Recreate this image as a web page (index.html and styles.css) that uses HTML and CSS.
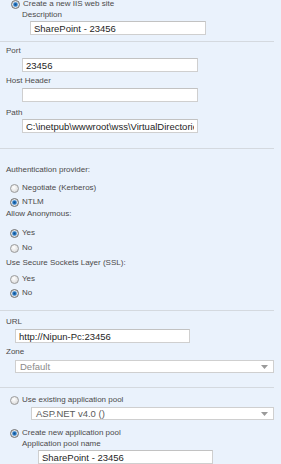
FILE: index.html
```html
<!DOCTYPE html>
<html lang="en">
<head>
  <meta charset="UTF-8">
  <title>Create New Web Application</title>
  <link rel="stylesheet" href="styles.css">
</head>
<body>
  <div class="panel">
    <div class="group group-site">
      <label class="choice choice-top"><input type="radio" name="site" checked> Create a new IIS web site</label>
      <div class="label indent mt1">Description</div>
      <input class="field field-desc mt1" type="text" value="SharePoint - 23456">
    </div>

    <div class="group group-port">
      <div class="label mt4">Port</div>
      <input class="field mt2" type="text" value="23456">
      <div class="label mt4">Host Header</div>
      <input class="field mt2" type="text" value="">
      <div class="label mt6">Path</div>
      <input class="field mt1" type="text" value="C:\inetpub\wwwroot\wss\VirtualDirectories\23456">
    </div>

    <div class="group group-auth">
      <div class="label mt16">Authentication provider:</div>
      <label class="choice mt8"><input type="radio" name="auth"> Negotiate (Kerberos)</label>
      <label class="choice mt4"><input type="radio" name="auth" checked> NTLM</label>
      <div class="label mt2">Allow Anonymous:</div>
      <label class="choice mt9"><input type="radio" name="anon" checked> Yes</label>
      <label class="choice mt5"><input type="radio" name="anon"> No</label>
      <div class="label mt5">Use Secure Sockets Layer (SSL):</div>
      <label class="choice mt6"><input type="radio" name="ssl"> Yes</label>
      <label class="choice mt4"><input type="radio" name="ssl" checked> No</label>
    </div>

    <div class="group group-url">
      <div class="label mt6">URL</div>
      <input class="field field-url mt2" type="text" value="http://Nipun-Pc:23456">
      <div class="label mt4">Zone</div>
      <div class="select select-zone mt3">
        <span>Default</span>
        <svg width="7" height="4" viewBox="0 0 7 4"><path d="M0 0h7L3.5 4z" fill="#9a9a9a"/></svg>
      </div>
    </div>

    <div class="group group-pool">
      <label class="choice mt7"><input type="radio" name="pool"> Use existing application pool</label>
      <div class="select select-pool mt2">
        <span>ASP.NET v4.0 ()</span>
        <svg width="7" height="4" viewBox="0 0 7 4"><path d="M0 0h7L3.5 4z" fill="#9a9a9a"/></svg>
      </div>
      <label class="choice mt8"><input type="radio" name="pool" checked> Create new application pool</label>
      <div class="label indent mt1">Application pool name</div>
      <input class="field field-pool mt1" type="text" value="SharePoint - 23456">
    </div>
  </div>
</body>
</html>
```

FILE: styles.css
```css
body {
  margin: 0;
  background-color: #eaf2fc;
  font-family: "Liberation Sans", Arial, sans-serif;
  color: #4a4a4a;
  font-size: 8px;
}
.panel {
  width: 274px;
  height: 464px;
  overflow: hidden;
}
.group {
  border-bottom: 1px solid #d4d9df;
  padding-left: 6px;
}
.group-site {
  padding-bottom: 6px;
}
.group-port {
  padding-bottom: 15px;
}
.group-auth {
  padding-bottom: 12px;
}
.group-url {
  padding-bottom: 14px;
}
.group-pool {
  border-bottom: none;
}
.label {
  height: 10px;
  line-height: 10px;
  white-space: nowrap;
}
.indent {
  padding-left: 16px;
}
.choice {
  display: flex;
  align-items: center;
  gap: 3px;
  height: 10px;
  line-height: 10px;
  white-space: nowrap;
  padding-left: 4px;
}
.choice-top {
  padding-left: 5px;
  margin-top: -1px;
}
.choice input {
  -webkit-appearance: none;
  appearance: none;
  margin: 0;
  width: 9px;
  height: 9px;
  border-radius: 50%;
  border: 1px solid #9b9b9b;
  background: radial-gradient(circle at 40% 35%, #ffffff 0, #e4e4e4 60%, #cfcfcf 100%);
  box-sizing: border-box;
  flex: none;
}
.choice input:checked {
  border-color: #6f6f6f;
  background: radial-gradient(circle at 50% 50%, #0c4f8e 0, #2a78c2 1.6px, #9ec3e6 2.4px, #e2e2e2 3px, #cfcfcf 100%);
}
.field {
  display: block;
  box-sizing: border-box;
  width: 176px;
  height: 14px;
  margin-left: 16px;
  padding: 0 3px;
  border: 1px solid #cfcfcf;
  border-top-color: #c2c2c2;
  background: #fff;
  font-family: "Liberation Sans", Arial, sans-serif;
  font-size: 9.5px;
  color: #1e1e1e;
  outline: none;
}
.field-desc {
  margin-left: 24px;
}
.field-url {
  margin-left: 9px;
  width: 175px;
}
.field-pool {
  margin-left: 32px;
  width: 175px;
}
.select {
  box-sizing: border-box;
  display: flex;
  align-items: center;
  justify-content: space-between;
  height: 13px;
  padding: 0 5px 0 4px;
  border: 1px solid #cfcfcf;
  background: #fff;
  font-size: 9.5px;
}
.select-zone {
  margin-left: 9px;
  color: #8a8a8a;
}
.select-pool {
  margin-left: 25px;
  color: #5a5a5a;
}
.mt1 { margin-top: 1px; }
.mt2 { margin-top: 2px; }
.mt3 { margin-top: 3px; }
.mt4 { margin-top: 4px; }
.mt5 { margin-top: 5px; }
.mt6 { margin-top: 6px; }
.mt7 { margin-top: 7px; }
.mt8 { margin-top: 8px; }
.mt9 { margin-top: 9px; }
.mt16 { margin-top: 16px; }
```
